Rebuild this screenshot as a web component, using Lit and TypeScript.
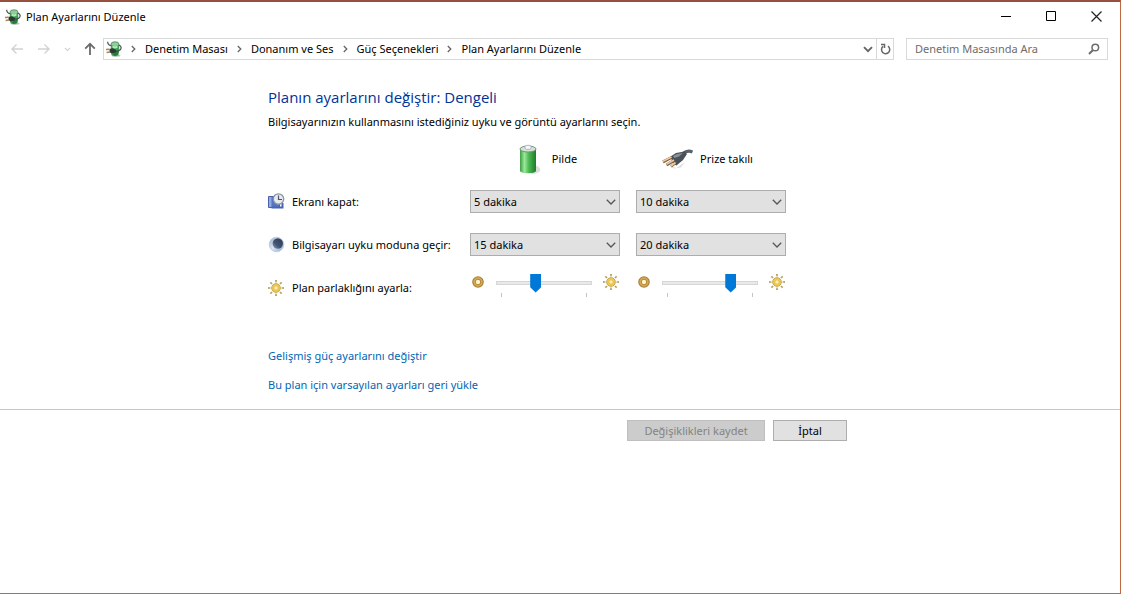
import { LitElement, html, css, svg } from "lit";
import { customElement, property } from "lit/decorators.js";

const chevronDown = html`<svg width="10" height="6" viewBox="0 0 10 6" aria-hidden="true">
  <path d="M.8.8 5 5 9.2.8" fill="none" stroke="currentColor" stroke-width="1.3" />
</svg>`;

const powerIcon = html`<svg width="16" height="16" viewBox="0 0 16 16" aria-hidden="true">
  <ellipse cx="10" cy="14.600" rx="4.500" ry="1.200" fill="#b9c4ba" />
  <path d="M5 3.500C4.600 7 4.800 11 5.500 14c1.500 1.500 5 1.500 6.800.2 1-3.200 1.200-7.200.7-10.700z" fill="#3fa155" />
  <path d="M9.500 10.500 12.600 9l-.6 4.500-3 1.500-2.500-1.500z" fill="#2a7a3d" />
  <ellipse cx="9" cy="3.200" rx="4" ry="2.400" fill="#8fd09a" stroke="#4d7f58" stroke-width=".8" />
  <path d="M6.500 4.500c1.500 1 3.500 1 5 0v2.200c-1.500 1-3.500 1-5 0z" fill="#b5e6ba" />
  <path d="M1.600.8C1.800 3.200 3 4.400 5 4.600M12.800 4.200c2.600.6 3 3.200 1.200 4.800-1 .9-2.200 1.300-3.600 1.400" fill="none" stroke="#44524b" stroke-width="1.200" />
  <path d="M3.400 8 6.500 7.200l4 1.800-.8 2.400-4 1.200-2-1.400z" fill="#2d3a33" />
  <path d="M0 8.600l3.600-.4M.6 11.600l3.400-.6" stroke="#ad8352" stroke-width="1.500" />
</svg>`;

const rays = [0, 45, 90, 135, 180, 225, 270, 315];
const sunIcon = html`<svg width="18" height="18" viewBox="0 0 18 18" aria-hidden="true">
  ${rays.map(
    (a) => svg`<path d="M8 1h2l-.4 2.600H8.400z" fill="#b5a15f" transform="rotate(${a} 9 9)" />`
  )}
  <circle cx="9" cy="9" r="4.300" fill="#f2cf58" stroke="#c8a24a" />
  <circle cx="9" cy="9" r="2.200" fill="#fff0a6" stroke="#dfb344" stroke-width=".8" />
</svg>`;

const dimIcon = html`<svg width="12" height="12" viewBox="0 0 12 12" aria-hidden="true">
  <circle cx="6" cy="6" r="4" fill="#fff3cd" stroke="#a97f35" stroke-width="3.600" />
  <circle cx="6" cy="6" r="3.800" fill="none" stroke="#d3a955" stroke-width="1.800" />
</svg>`;

const displayIcon = html`<svg width="17" height="17" viewBox="0 0 17 17" aria-hidden="true">
  <path d="M.5 3.500h11v11H.5z" fill="#5674c6" stroke="#4a60a8" />
  <path d="M1 4h2.500v10H1z" fill="#92a9e2" />
  <path d="M3.500 14.500h11V10" fill="none" stroke="#4864b4" stroke-width="2" />
  <circle cx="10.500" cy="6" r="5.200" fill="#e6ebf0" stroke="#8a94a0" stroke-width="1.300" />
  <path d="M10.500 2.500v4H14" fill="none" stroke="#4d5660" stroke-width="1.200" />
</svg>`;

const moonIcon = html`<svg width="17" height="17" viewBox="0 0 17 17" aria-hidden="true">
  <defs>
    <linearGradient id="moon" x1="0" y1="0" x2="1" y2="1">
      <stop offset="0" stop-color="#93a8c8" />
      <stop offset=".5" stop-color="#dbe6f3" />
      <stop offset="1" stop-color="#7fa2d2" />
    </linearGradient>
    <linearGradient id="shade" x1="1" y1="0" x2="0" y2="1">
      <stop offset="0" stop-color="#2f3a52" />
      <stop offset=".6" stop-color="#43536f" />
      <stop offset="1" stop-color="#8c9db8" />
    </linearGradient>
  </defs>
  <circle cx="8.500" cy="8.500" r="7.300" fill="url(#moon)" stroke="#c3cfdf" />
  <circle cx="9.800" cy="7.500" r="5.200" fill="url(#shade)" />
</svg>`;

const batteryIcon = html`<svg width="24" height="32" viewBox="0 0 24 32" aria-hidden="true">
  <defs>
    <linearGradient id="cell">
      <stop offset="0" stop-color="#3f9d45" />
      <stop offset=".28" stop-color="#9be898" />
      <stop offset=".55" stop-color="#4cb952" />
      <stop offset="1" stop-color="#1f7a2a" />
    </linearGradient>
  </defs>
  <path d="M16 22c5 1 7 4 6 6-1 2-5 3-9 3z" fill="#dcdedb" />
  <path d="M2 6v22c1 3 15 3 16 0V6z" fill="url(#cell)" />
  <ellipse cx="10" cy="6" rx="8" ry="3" fill="#d6e2d7" stroke="#71937a" />
  <path d="M7 3.500c0-1.600 6-1.600 6 0v2c-1 1.300-5 1.300-6 0z" fill="#f6f7fa" stroke="#9aa0b5" stroke-width=".7" />
</svg>`;

const plugIcon = html`<svg width="32" height="20" viewBox="0 0 32 20" aria-hidden="true">
  <path d="M9 17 15 19l9-6-4 5.500-7 1z" fill="#e0e0e0" />
  <path d="M31.500 3C28 1.500 25 2 22 4.500" fill="none" stroke="#5b616a" stroke-width="3.200" />
  <path d="M9.500 7.500 15 4l8.500-1.500L26 5l-4 6-6.500 5.500-3.500-2z" fill="#4a5059" />
  <path d="M12 7 16 5l6-1-4 3.500-4.500 1.500z" fill="#8b9098" />
  <path d="M10.500 8.500 2 12.800M13 11.500 5.500 16" stroke="#7b5b42" stroke-width="3" />
  <path d="M14.500 14 10 17.500" stroke="#7b5b42" stroke-width="2.400" />
  <path d="M10.500 8 2 12.200M13 11 5.500 15.400M14.500 13.500 10 17" stroke="#eccba0" stroke-width="1.600" />
</svg>`;

@customElement("minutes-select")
class MinutesSelect extends LitElement {
  @property() value = "";
  @property() label = "";

  static styles = css`
    :host {
      display: grid;
      color: #555;
    }
    .field,
    svg {
      grid-area: 1 / 1;
    }
    .field {
      appearance: none;
      width: 100%;
      height: 23px;
      padding: 0 24px 0 3px;
      border: 1px solid #adadad;
      border-radius: 0;
      background: #e1e1e1;
      color: #000;
      font: inherit;
    }
    svg {
      place-self: center end;
      margin-right: 4px;
      pointer-events: none;
    }
  `;

  render() {
    return html`<select class="field" aria-label=${this.label}>
        <option>${this.value}</option>
      </select>
      ${chevronDown}`;
  }
}

@customElement("brightness-slider")
class BrightnessSlider extends LitElement {
  @property({ type: Number }) value = 0;
  @property() label = "";

  static styles = css`
    :host {
      display: flex;
      align-items: flex-start;
      gap: 12px;
      padding-left: 2px;
    }
    svg {
      display: block;
    }
    .dim {
      padding-top: 3px;
    }
    .bright {
      margin-left: -2px;
    }
    .scale {
      display: flex;
      flex-direction: column;
      width: 98px;
    }
    .range {
      appearance: none;
      width: 100%;
      height: 19px;
      margin: 0;
      background: none;
    }
    .range::-webkit-slider-runnable-track {
      height: 4px;
      border: 1px solid #d6d6d6;
      box-sizing: border-box;
      background: #e7eaea;
    }
    .range::-webkit-slider-thumb {
      appearance: none;
      width: 11px;
      height: 19px;
      margin-top: -8px;
      background: #0078d7;
      clip-path: polygon(0 0, 100% 0, 100% 72%, 50% 100%, 0 72%);
    }
    .ticks {
      height: 4px;
      margin: 1px 5px 0;
      border: solid #c4c4c4;
      border-width: 0 1px;
    }
  `;

  render() {
    return html`<span class="dim">${dimIcon}</span>
      <div class="scale">
        <input class="range" type="range" min="0" max="100" .value=${String(this.value)} aria-label=${this.label} />
        <div class="ticks"></div>
      </div>
      <span class="bright">${sunIcon}</span>`;
  }
}

@customElement("app-root")
class AppRoot extends LitElement {
  static styles = css`
    :host {
      display: flex;
      flex-direction: column;
      box-sizing: border-box;
      min-height: 100vh;
      border: solid #c0683f;
      border-width: 2px 1px 1px 0;
      border-top-color: #96503f;
      background: #fff;
      color: #000;
      font: 11px/16px "Noto Sans", "Open Sans", sans-serif;
    }
    * {
      box-sizing: border-box;
    }
    button {
      padding: 0;
      font: inherit;
    }
    svg {
      display: block;
      flex: none;
    }
    .titlebar {
      display: flex;
      align-items: center;
      height: 29px;
      padding: 0 1px 0 5px;
      gap: 5px;
    }
    .title {
      flex: 1;
      margin: 0;
      font: inherit;
    }
    .caption {
      display: flex;
    }
    .caption button {
      display: grid;
      place-items: center;
      width: 45px;
      height: 28px;
      border: 0;
      background: none;
    }
    .nav {
      display: flex;
      align-items: center;
      padding: 7px 12px 0 10px;
    }
    .history {
      display: flex;
      align-items: center;
      justify-content: space-between;
      width: 86px;
      margin-right: 7px;
      color: #d2d2d2;
    }
    .history button {
      display: flex;
      border: 0;
      background: none;
      color: inherit;
    }
    .history .up {
      color: #6b6b6b;
    }
    .address {
      display: flex;
      flex: 1;
      align-items: center;
      height: 22px;
      padding-left: 2px;
      border: 1px solid #d9d9d9;
    }
    .crumbs {
      display: flex;
      flex: 1;
      margin: 0;
      padding: 0;
      list-style: none;
    }
    .crumbs li {
      display: flex;
      align-items: center;
    }
    .crumbs svg {
      margin: 0 9px;
      color: #666;
    }
    .crumbs a {
      color: inherit;
      text-decoration: none;
    }
    .address button {
      display: grid;
      place-items: center;
      width: 17px;
      height: 20px;
      border: 0;
      background: none;
      color: #666;
    }
    .address .refresh {
      border-left: 1px solid #d9d9d9;
    }
    .search {
      display: flex;
      align-items: center;
      width: 202px;
      height: 22px;
      margin-left: 12px;
      padding: 0 7px 0 8px;
      border: 1px solid #d9d9d9;
      color: #6d6d6d;
    }
    .search input {
      flex: 1;
      min-width: 0;
      padding: 0;
      border: 0;
      outline: 0;
      background: none;
      font: inherit;
    }
    .search input::placeholder {
      color: #6d6d6d;
    }
    .content {
      width: 100%;
      max-width: 584px;
      margin: 0 auto;
      padding: 27px 0 16px;
    }
    .heading {
      margin: 0;
      color: #003399;
      font-family: "Open Sans", "Noto Sans", sans-serif;
      font-size: 15px;
      font-weight: 400;
      line-height: 20px;
    }
    .intro {
      margin: 7px 0 13px;
    }
    .grid {
      display: grid;
      grid-template-columns: 186px 150px 150px;
      column-gap: 16px;
      grid-template-rows: 32px 33px 33px 28px;
      row-gap: 10px;
      align-items: center;
    }
    .source {
      display: flex;
      align-items: center;
      justify-content: center;
    }
    .battery {
      gap: 10px;
      padding-left: 5px;
    }
    .plug {
      gap: 7px;
      padding-right: 8px;
    }
    .label {
      display: flex;
      align-items: center;
      gap: 7px;
      white-space: nowrap;
    }
    .label.sun {
      padding-top: 6px;
      margin-left: -1px;
    }
    .links {
      display: flex;
      flex-direction: column;
      align-items: flex-start;
      gap: 13px;
      margin-top: 49px;
    }
    .links a {
      color: #0066b4;
      text-decoration: none;
    }
    .footer {
      border-top: 1px solid #c8c8c8;
    }
    .actions {
      display: flex;
      justify-content: flex-end;
      gap: 8px;
      max-width: 584px;
      margin: 0 auto;
      padding: 10px 5px 0 0;
    }
    .actions button {
      width: 74px;
      height: 21px;
      border: 1px solid #adadad;
      background: #e1e1e1;
      color: #000;
    }
    .actions .save {
      width: 138px;
      border-color: #bfbfbf;
      background: #ccc;
      color: #838383;
    }
  `;

  render() {
    const crumbs = ["Denetim Masası", "Donanım ve Ses", "Güç Seçenekleri", "Plan Ayarlarını Düzenle"];
    const rows = [
      { icon: displayIcon, text: "Ekranı kapat:", values: ["5 dakika", "10 dakika"] },
      { icon: moonIcon, text: "Bilgisayarı uyku moduna geçir:", values: ["15 dakika", "20 dakika"] },
    ];
    return html`
      <header class="titlebar">
        ${powerIcon}
        <h1 class="title">Plan Ayarlarını Düzenle</h1>
        <div class="caption">
          <button aria-label="Simge durumuna küçült">
            <svg width="11" height="11" viewBox="0 0 11 11"><path d="M0 5.500h10" stroke="#000" /></svg>
          </button>
          <button aria-label="Ekranı kapla">
            <svg width="11" height="11" viewBox="0 0 11 11"><path d="M.5.5h9v9H.5z" fill="none" stroke="#000" /></svg>
          </button>
          <button aria-label="Kapat">
            <svg width="11" height="11" viewBox="0 0 11 11"><path d="M.5.5l10 10m0-10-10 10" stroke="#222" stroke-width="1.200" /></svg>
          </button>
        </div>
      </header>
      <nav class="nav">
        <div class="history">
          <button aria-label="Geri">
            <svg width="14" height="12" viewBox="0 0 14 12"><path d="M13 6H2M6.500 1.500 2 6l4.500 4.500" fill="none" stroke="currentColor" stroke-width="1.400" /></svg>
          </button>
          <button aria-label="İleri">
            <svg width="14" height="12" viewBox="0 0 14 12"><path d="M1 6h11M7.500 1.500 12 6l-4.500 4.500" fill="none" stroke="currentColor" stroke-width="1.400" /></svg>
          </button>
          <button aria-label="Son konumlar">
            <svg width="7" height="5" viewBox="0 0 7 5"><path d="M.8.8 3.500 3.500 6.200.8" fill="none" stroke="currentColor" stroke-width="1.200" /></svg>
          </button>
          <button class="up" aria-label="Yukarı">
            <svg width="12" height="14" viewBox="0 0 12 14"><path d="M6 13V2M1.200 6.600 6 1.800l4.800 4.800" fill="none" stroke="currentColor" stroke-width="1.800" /></svg>
          </button>
        </div>
        <div class="address">
          ${powerIcon}
          <ol class="crumbs">
            ${crumbs.map(
              (c) => html`<li>
                <svg width="5" height="8" viewBox="0 0 5 8" aria-hidden="true"><path d="M.8 1 3.800 4 .8 7" fill="none" stroke="currentColor" stroke-width="1.300" /></svg>
                <a href="#">${c}</a>
              </li>`
            )}
          </ol>
          <button aria-label="Önceki konumlar">
            <svg width="10" height="7" viewBox="0 0 10 7"><path d="M1 1.200l4 4 4-4" fill="none" stroke="currentColor" stroke-width="1.900" /></svg>
          </button>
          <button class="refresh" aria-label="Yenile">
            <svg width="11" height="12" viewBox="0 0 11 12"><path d="M8 3.200A4.100 4.100 0 1 1 3 3.400M1 1.500h3.500V5" fill="none" stroke="currentColor" stroke-width="1.500" /></svg>
          </button>
        </div>
        <label class="search">
          <input type="text" placeholder="Denetim Masasında Ara" aria-label="Ara" />
          <svg width="12" height="12" viewBox="0 0 12 12" aria-hidden="true"><path d="M1 11l4-4" stroke="currentColor" stroke-width="2" /><circle cx="7.300" cy="4.500" r="3.300" fill="none" stroke="currentColor" stroke-width="1.500" /></svg>
        </label>
      </nav>
      <main class="content">
        <h2 class="heading">Planın ayarlarını değiştir: Dengeli</h2>
        <p class="intro">Bilgisayarınızın kullanmasını istediğiniz uyku ve görüntü ayarlarını seçin.</p>
        <div class="grid">
          <span></span>
          <div class="source battery">${batteryIcon}<span>Pilde</span></div>
          <div class="source plug">${plugIcon}<span>Prize takılı</span></div>
          ${rows.map(
            (r) => html`<div class="label">${r.icon}<span>${r.text}</span></div>
              <minutes-select .value=${r.values[0]} .label=${`${r.text} Pilde`}></minutes-select>
              <minutes-select .value=${r.values[1]} .label=${`${r.text} Prize takılı`}></minutes-select>`
          )}
          <div class="label sun">${sunIcon}<span>Plan parlaklığını ayarla:</span></div>
          <brightness-slider .value=${40} .label=${"Plan parlaklığı, Pilde"}></brightness-slider>
          <brightness-slider .value=${75} .label=${"Plan parlaklığı, Prize takılı"}></brightness-slider>
        </div>
        <div class="links">
          <a href="#">Gelişmiş güç ayarlarını değiştir</a>
          <a href="#">Bu plan için varsayılan ayarları geri yükle</a>
        </div>
      </main>
      <footer class="footer">
        <div class="actions">
          <button class="save" disabled>Değişiklikleri kaydet</button>
          <button>İptal</button>
        </div>
      </footer>
    `;
  }
}
